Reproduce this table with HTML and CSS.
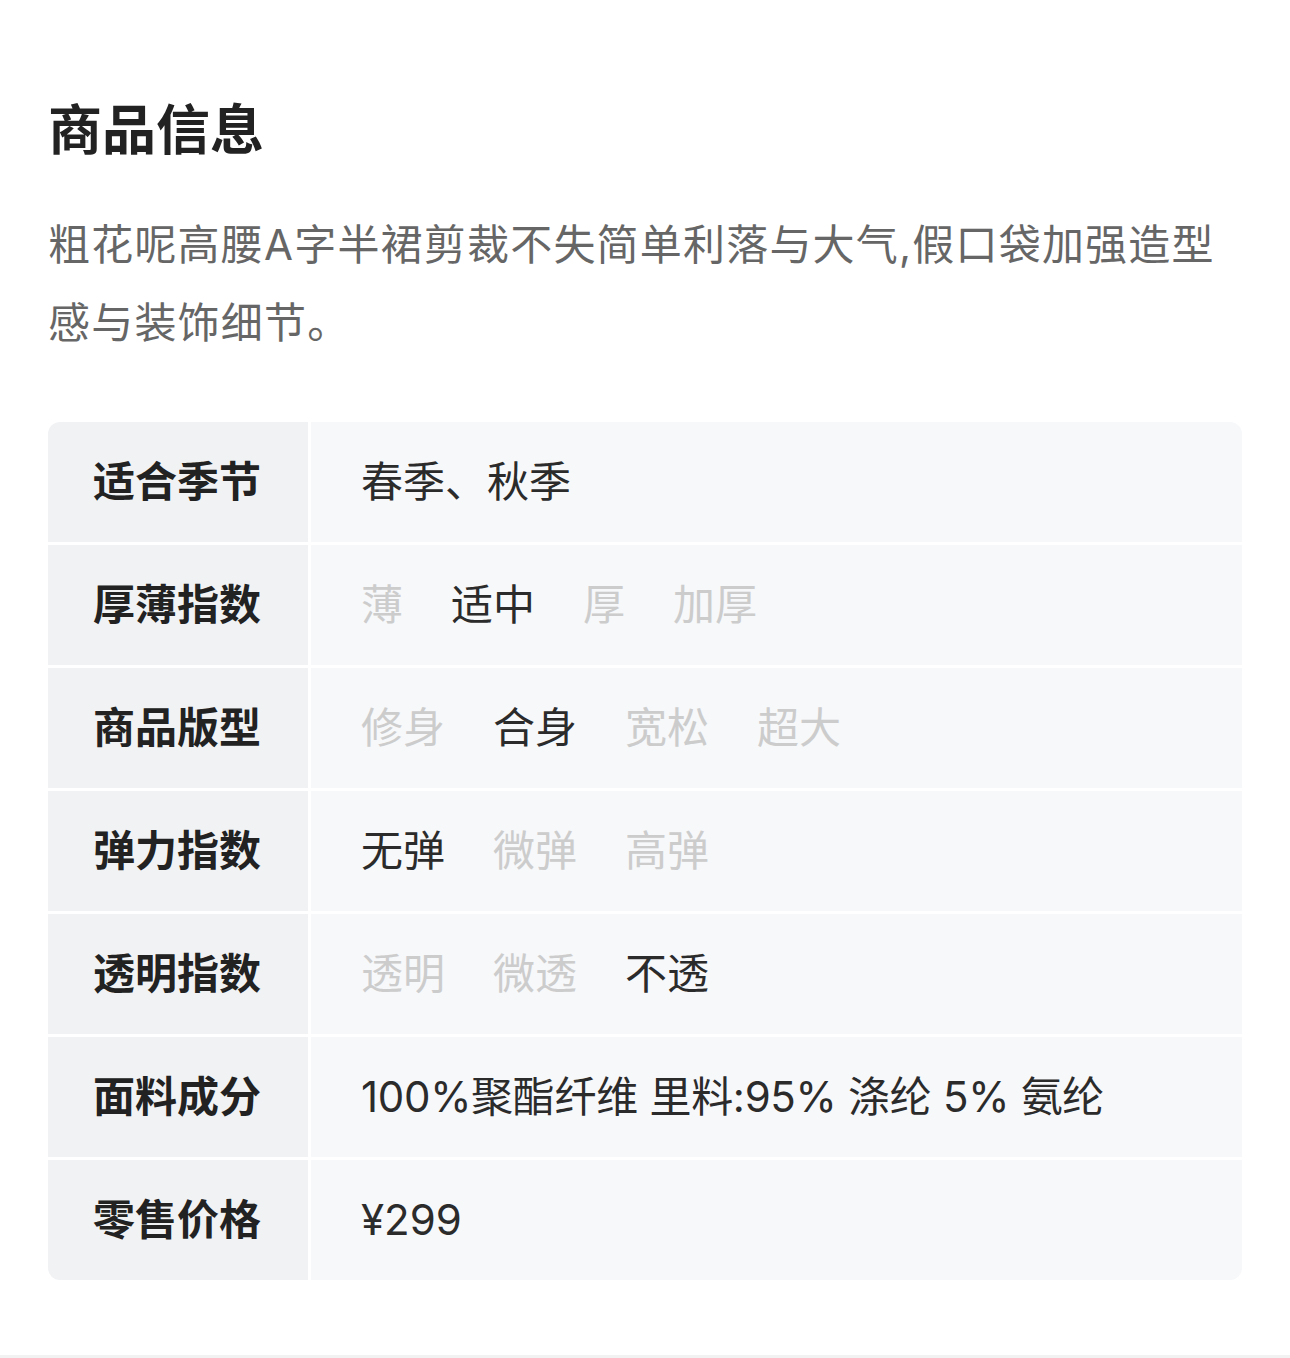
FILE: index.html
```html
<!DOCTYPE html>
<html lang="zh-CN">
<head>
<meta charset="utf-8">
<link rel="stylesheet" href="styles.css">
</head>
<body>
<div class="page">
  <section class="info">
    <h1 class="title">商品信息</h1>
    <p class="desc">粗花呢高腰A字半裙剪裁不失简单利落与大气,假口袋加强造型感与装饰细节。</p>
    <div class="table">
      <div class="label">适合季节</div>
      <div class="value"><span class="on">春季、秋季</span></div>

      <div class="label">厚薄指数</div>
      <div class="value opts"><span class="off">薄</span><span class="on">适中</span><span class="off">厚</span><span class="off">加厚</span></div>

      <div class="label">商品版型</div>
      <div class="value opts"><span class="off">修身</span><span class="on">合身</span><span class="off">宽松</span><span class="off">超大</span></div>

      <div class="label">弹力指数</div>
      <div class="value opts"><span class="on">无弹</span><span class="off">微弹</span><span class="off">高弹</span></div>

      <div class="label">透明指数</div>
      <div class="value opts"><span class="off">透明</span><span class="off">微透</span><span class="on">不透</span></div>

      <div class="label">面料成分</div>
      <div class="value"><span class="on tight">100%聚酯纤维 里料:95% 涤纶 5% 氨纶</span></div>

      <div class="label">零售价格</div>
      <div class="value latin"><span class="on">¥299</span></div>
    </div>
  </section>
  <div class="divider"></div>
</div>
</body>
</html>
```

FILE: styles.css
```css
* { box-sizing: border-box; }
html, body { margin: 0; padding: 0; background: #ffffff; }
body {
  font-family: "Inter", "Noto Sans CJK SC", sans-serif;
  color: #222222;
}
.page { width: 1290px; }
.info { padding: 89px 48px 75px; }
.title {
  margin: 0;
  font-family: "Noto Sans CJK SC", sans-serif;
  font-size: 54px;
  line-height: 76px;
  font-weight: 700;
  color: #222222;
}
.desc {
  margin: 41px 0 0;
  font-size: 42px;
  line-height: 78px;
  letter-spacing: 1.2px;
  color: #666666;
  font-weight: 400;
}
.table {
  margin-top: 60px;
  display: grid;
  grid-template-columns: 260px 1fr;
  grid-auto-rows: 120px;
  gap: 3px;
  border-radius: 12px;
  overflow: hidden;
}
.label {
  background: #f1f2f4;
  display: flex;
  align-items: center;
  padding: 0 0 8px 45px;
  font-family: "Noto Sans CJK SC", sans-serif;
  font-size: 42px;
  font-weight: 700;
  color: #222222;
}
.value {
  background: #f7f8fa;
  display: flex;
  align-items: center;
  padding: 0 0 8px 50px;
  font-size: 42px;
  color: #333333;
  gap: 48px;
}
.value.latin { padding-bottom: 2px; }
.tight { letter-spacing: -0.3px; }
.on { color: #2b2b2b; }
.off { color: #cccccc; }
.divider {
  height: 3px;
  background: #f2f2f2;
}
```
